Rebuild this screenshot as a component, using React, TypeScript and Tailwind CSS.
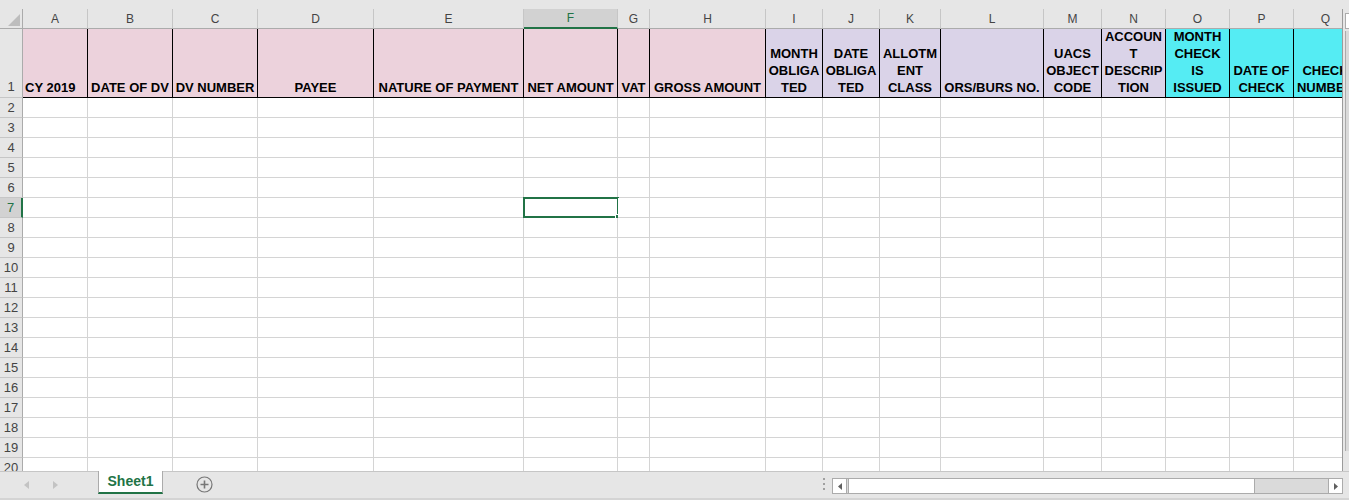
import React from 'react';

const cols = [
  { key: 'A', w: 'w-[65px]', bg: 'bg-[#ecd2dc]', lines: ['CY 2019'], align: 'justify-start pl-[2px]' },
  { key: 'B', w: 'w-[85px]', bg: 'bg-[#ecd2dc]', lines: ['DATE OF DV'] },
  { key: 'C', w: 'w-[85px]', bg: 'bg-[#ecd2dc]', lines: ['DV NUMBER'] },
  { key: 'D', w: 'w-[116px]', bg: 'bg-[#ecd2dc]', lines: ['PAYEE'] },
  { key: 'E', w: 'w-[150px]', bg: 'bg-[#ecd2dc]', lines: ['NATURE OF PAYMENT'] },
  { key: 'F', w: 'w-[94px]', bg: 'bg-[#ecd2dc]', lines: ['NET AMOUNT'] },
  { key: 'G', w: 'w-[32px]', bg: 'bg-[#ecd2dc]', lines: ['VAT'] },
  { key: 'H', w: 'w-[116px]', bg: 'bg-[#ecd2dc]', lines: ['GROSS AMOUNT'] },
  { key: 'I', w: 'w-[57px]', bg: 'bg-[#dad3e8]', lines: ['MONTH', 'OBLIGA', 'TED'] },
  { key: 'J', w: 'w-[57px]', bg: 'bg-[#dad3e8]', lines: ['DATE', 'OBLIGA', 'TED'] },
  { key: 'K', w: 'w-[61px]', bg: 'bg-[#dad3e8]', lines: ['ALLOTM', 'ENT', 'CLASS'] },
  { key: 'L', w: 'w-[103px]', bg: 'bg-[#dad3e8]', lines: ['ORS/BURS NO.'] },
  { key: 'M', w: 'w-[58px]', bg: 'bg-[#dad3e8]', lines: ['UACS', 'OBJECT', 'CODE'] },
  { key: 'N', w: 'w-[64px]', bg: 'bg-[#dad3e8]', lines: ['ACCOUN', 'T', 'DESCRIP', 'TION'] },
  { key: 'O', w: 'w-[64px]', bg: 'bg-[#55ecf3]', lines: ['MONTH', 'CHECK', 'IS', 'ISSUED'] },
  { key: 'P', w: 'w-[64px]', bg: 'bg-[#55ecf3]', lines: ['DATE OF', 'CHECK'] },
  { key: 'Q', w: 'w-[64px]', bg: 'bg-[#55ecf3]', lines: ['CHECK', 'NUMBER'] },
];

const rows = Array.from({ length: 19 }, (_, i) => i + 2);

function ColumnHeaders() {
  return (
    <div className="flex h-[20px]">
      <div className="w-[23px] shrink-0 border-r border-b border-[#ababab] bg-[#e6e6e6] relative overflow-hidden">
        <svg className="absolute right-[2px] bottom-[2px]" width="12" height="12" viewBox="0 0 12 12">
          <polygon points="12,0 12,12 0,12" fill="#bdbdbd" />
        </svg>
      </div>
      {cols.map(c => {
        const sel = c.key === 'F';
        return (
          <div
            key={c.key}
            className={`${c.w} shrink-0 flex items-center justify-center border-r border-[#c6c6c6] ${sel ? 'bg-[#d2d2d2] text-[#217346] border-b-2 border-b-[#217346]' : 'bg-[#e6e6e6] text-[#444] border-b border-b-[#ababab]'}`}
          >
            {c.key}
          </div>
        );
      })}
    </div>
  );
}

function TitleRow() {
  return (
    <div className="flex h-[69px]">
      <div className="w-[23px] shrink-0 border-r border-b border-r-[#ababab] border-b-[#c6c6c6] bg-[#e6e6e6] text-[#444] text-[13px] flex items-end justify-center pb-[1px]">1</div>
      {cols.map(c => (
        <div
          key={c.key}
          className={`${c.w} ${c.bg} shrink-0 border-r border-b border-black flex items-end ${c.align ?? 'justify-center'} pb-[1px] overflow-visible whitespace-nowrap`}
        >
          <div className={`font-bold text-[13px] text-black leading-[17px] ${c.align ? 'text-left' : 'text-center'}`}>
            {c.lines.map((l, i) => (
              <div key={i}>{l}</div>
            ))}
          </div>
        </div>
      ))}
    </div>
  );
}

function DataRow({ n }: { n: number }) {
  const selRow = n === 7;
  return (
    <div className="flex h-[20px]">
      <div
        className={`w-[23px] shrink-0 border-b border-[#c6c6c6] text-[13px] flex items-center justify-center ${selRow ? 'bg-[#d2d2d2] text-[#217346] border-r-2 border-r-[#217346]' : 'bg-[#e6e6e6] text-[#444] border-r border-r-[#ababab]'}`}
      >
        {n}
      </div>
      {cols.map(c => (
        <div key={c.key} className={`${c.w} shrink-0 border-r border-b border-[#d4d4d4] bg-white relative`}>
          {selRow && c.key === 'F' && (
            <div className="absolute -left-[1px] -top-[1px] w-[96px] h-[21px] border-2 border-[#217346]">
              <div className="absolute -right-[4px] -bottom-[4px] w-[6px] h-[6px] bg-[#217346] border border-white" />
            </div>
          )}
        </div>
      ))}
    </div>
  );
}

function TabBar() {
  return (
    <div className="h-[29px] flex bg-[#e6e6e6] border-t border-[#c6c6c6] border-b-2 border-b-[#d4d4d4] relative">
      <div className="w-[98px] flex items-center">
        <svg className="ml-[24px]" width="6" height="8" viewBox="0 0 6 8">
          <polygon points="5,0 5,8 0,4" fill="#c3c3c3" />
        </svg>
        <svg className="ml-[22px]" width="6" height="8" viewBox="0 0 6 8">
          <polygon points="1,0 1,8 6,4" fill="#c3c3c3" />
        </svg>
      </div>
      <div className="-mt-[1px] h-[23px] w-[65px] bg-white border-x border-[#ababab] border-b-2 border-b-[#217346] flex items-center justify-center text-[#217346] font-bold text-[14px]">
        Sheet1
      </div>
      <div className="w-[82px] flex items-center justify-center -mt-[2px]">
        <svg width="17" height="17" viewBox="0 0 17 17">
          <circle cx="8.5" cy="8.5" r="7.5" fill="none" stroke="#777" strokeWidth="1.2" />
          <path d="M8.5 4.5v8M4.5 8.5h8" stroke="#777" strokeWidth="1.6" />
        </svg>
      </div>
      <div className="flex-1" />
      <div className="w-[16px] flex flex-col items-center justify-center gap-[3px] -mt-[2px]">
        <div className="w-[2px] h-[2px] bg-[#a0a0a0]" />
        <div className="w-[2px] h-[2px] bg-[#a0a0a0]" />
        <div className="w-[2px] h-[2px] bg-[#a0a0a0]" />
      </div>
      <div className="w-[511px] mr-[6px] mt-[6px] h-[16px] flex border border-[#ababab] bg-[#dadada]">
        <div className="w-[14px] bg-white border-r border-[#ababab] flex items-center justify-center">
          <svg width="4" height="7" viewBox="0 0 4 7">
            <polygon points="4,0 4,7 0,3.5" fill="#606060" />
          </svg>
        </div>
        <div className="ml-[1px] w-[407px] bg-white border border-[#ababab] -my-[1px]" />
        <div className="flex-1" />
        <div className="w-[14px] bg-white border-l border-[#ababab] flex items-center justify-center">
          <svg width="4" height="7" viewBox="0 0 4 7">
            <polygon points="0,0 0,7 4,3.5" fill="#606060" />
          </svg>
        </div>
      </div>
    </div>
  );
}

export default function App() {
  return (
    <div className="w-[1349px] h-[500px] flex flex-col bg-[#e6e6e6] overflow-hidden text-[12px] font-['Liberation_Sans',Arial,sans-serif]">
      <div className="h-[9px] shrink-0 bg-[#e6e6e6]" />
      <div className="flex h-[462px] shrink-0">
        <div className="w-[1343px] shrink-0 overflow-hidden bg-white border-r border-[#9b9b9b]">
          <div className="w-max">
            <ColumnHeaders />
            <TitleRow />
            {rows.map(n => (
              <DataRow key={n} n={n} />
            ))}
          </div>
        </div>
        <div className="flex-1 bg-[#e6e6e6] pt-[4px] pl-[2px]">
          <div className="h-[16px] border-l border-t border-b border-[#ababab] bg-white" />
          <div className="h-[420px] mt-[2px] border-l border-[#ababab] bg-[#dadada]" />
        </div>
      </div>
      <TabBar />
    </div>
  );
}
